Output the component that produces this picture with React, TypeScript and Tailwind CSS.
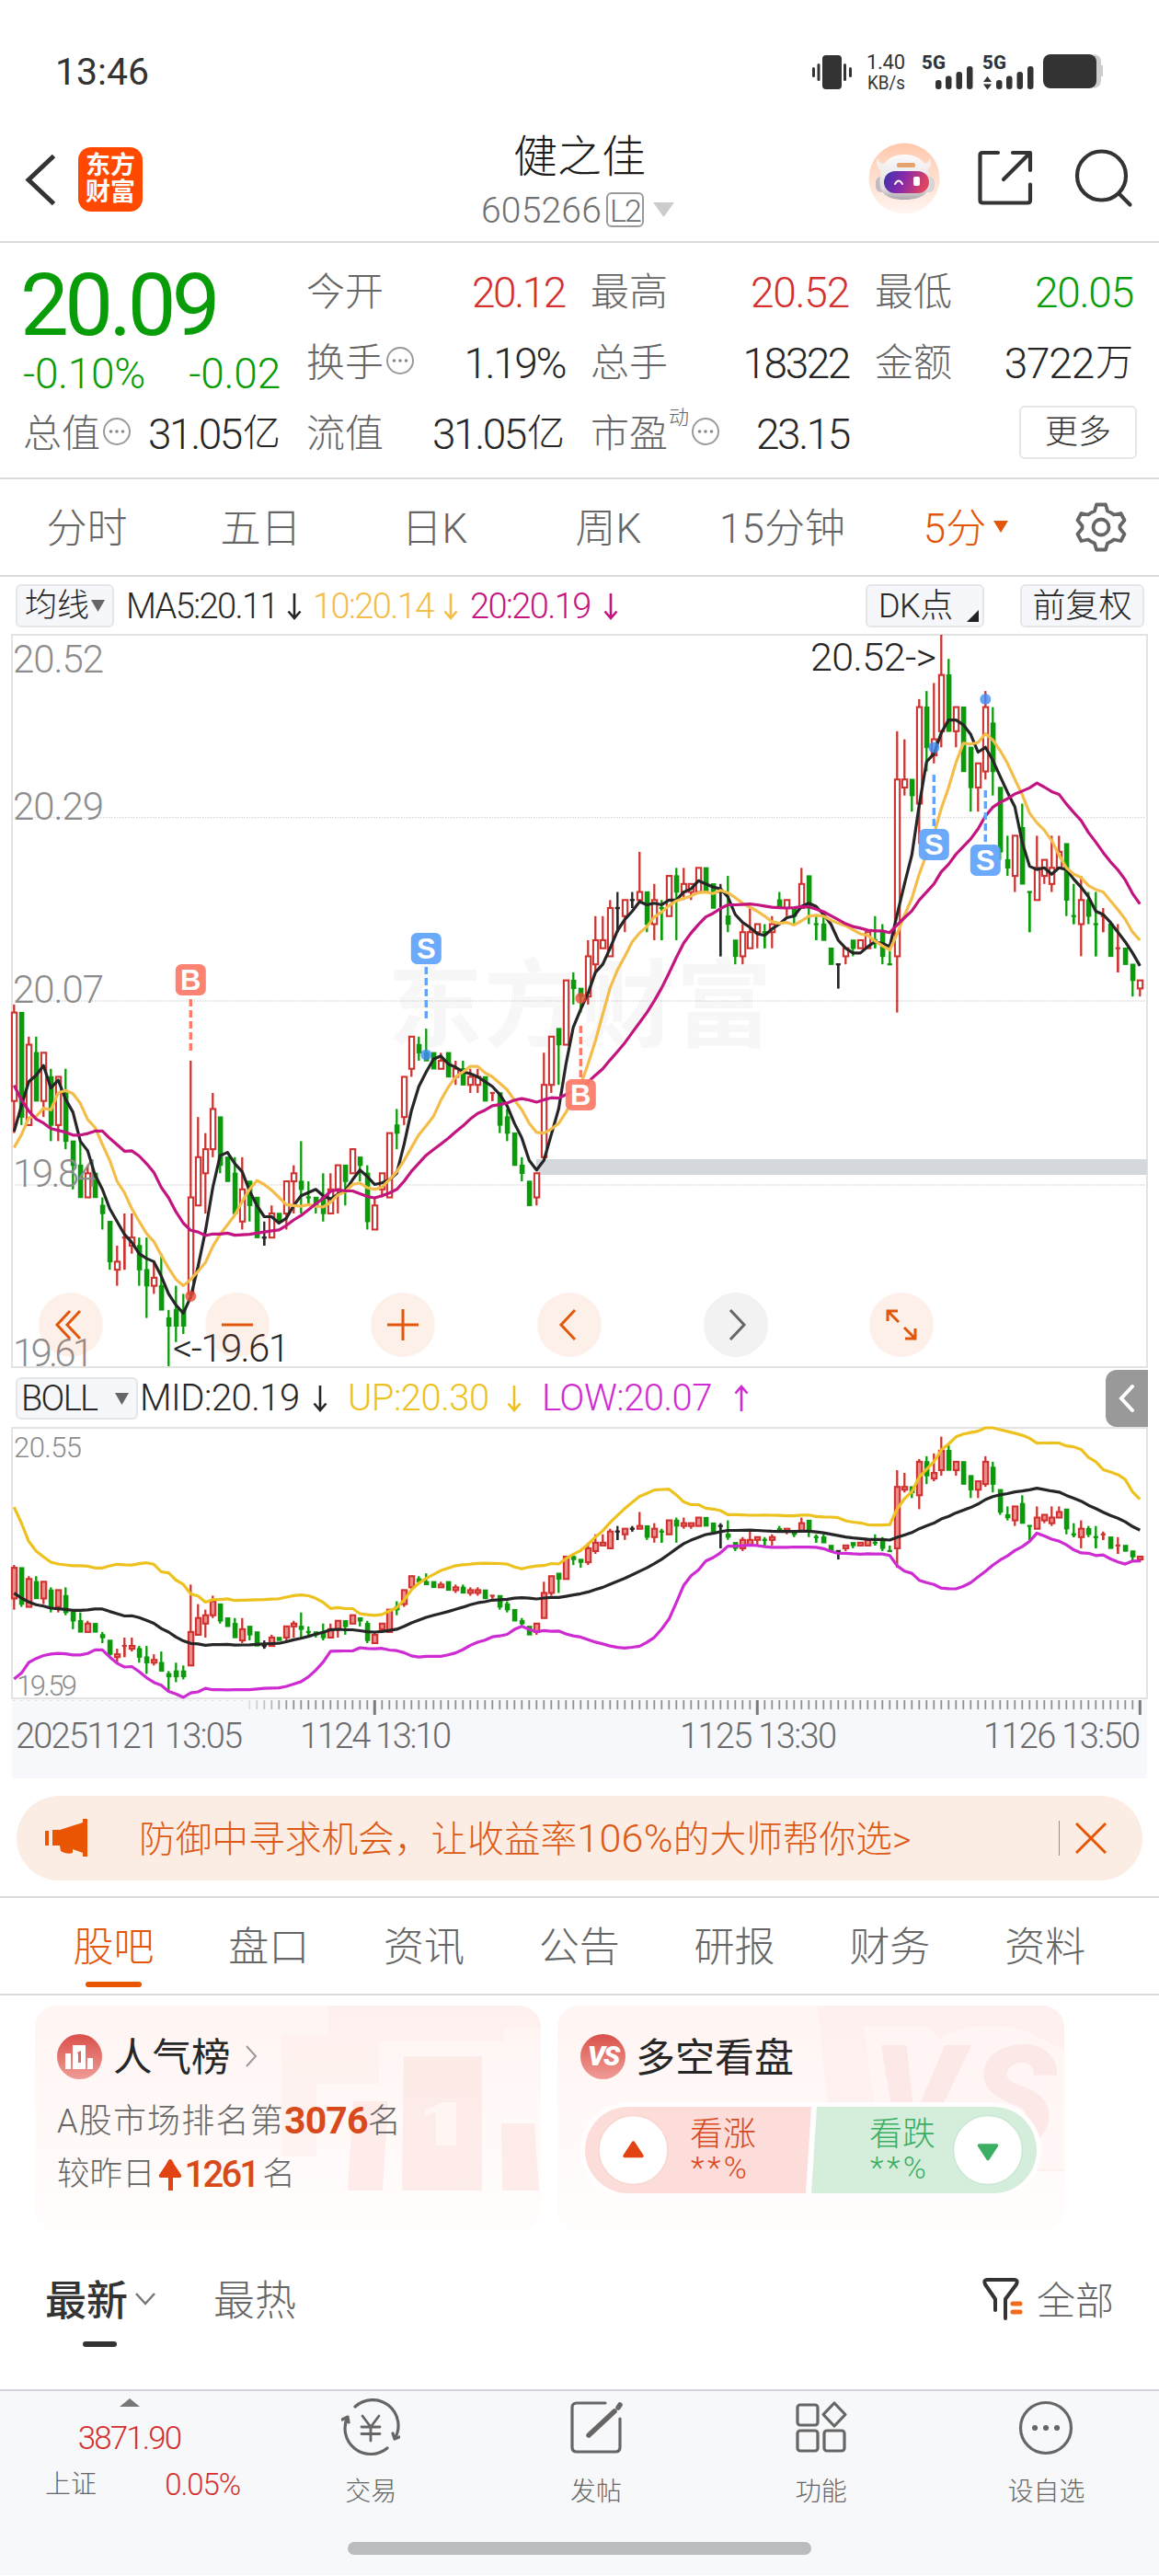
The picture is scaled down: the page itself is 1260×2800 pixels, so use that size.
import { ReactNode } from "react";

const RED = "#cb3432";
const GREEN = "#089d08";
const BLACK = "#262626";

// cents above 19.00, one bar per 5 minutes: open, close, high, low
const BARS: number[][] = [
  [94, 105, 106, 90], [105, 92, 105, 91], [91, 101, 102, 91], [100, 94, 102, 94], [94, 100, 100, 92],
  [97, 91, 98, 89], [91, 97, 97, 89], [95, 89, 98, 88], [89, 86, 89, 83], [86, 82, 89, 82],
  [82, 85, 86, 82], [85, 82, 85, 82], [81, 80, 82, 78], [79, 74, 79, 73], [73, 74, 76, 71],
  [77, 77, 80, 73], [76, 77, 80, 75], [76, 73, 77, 71], [73, 71, 77, 67], [71, 72, 74, 70],
  [71, 68, 75, 68], [67, 66, 68, 61], [68, 66, 71, 64], [68, 66, 70, 65], [70, 82, 99, 70],
  [81, 87, 92, 81], [85, 88, 90, 80], [88, 93, 95, 87], [92, 86, 92, 85], [87, 84, 87, 84],
  [85, 80, 87, 80], [79, 83, 87, 78], [84, 81, 84, 79], [82, 77, 82, 77], [77, 77, 79, 76],
  [77, 80, 81, 77], [80, 79, 80, 79], [80, 84, 84, 78], [84, 85, 86, 80], [84, 83, 89, 80],
  [82, 82, 84, 81], [82, 81, 82, 80], [82, 80, 85, 79], [80, 83, 85, 80], [83, 86, 86, 80],
  [86, 84, 86, 81], [85, 88, 88, 85], [87, 86, 87, 84], [85, 79, 86, 78], [78, 81, 82, 78],
  [83, 85, 85, 82], [82, 90, 90, 82], [91, 90, 93, 88], [92, 97, 97, 91], [98, 102, 102, 97],
  [101, 100, 102, 99], [100, 99, 103, 99], [100, 98, 100, 98], [98, 99, 100, 98], [100, 97, 100, 97],
  [97, 98, 99, 96], [98, 96, 99, 96], [96, 97, 98, 95], [96, 97, 98, 95], [97, 94, 97, 94],
  [95, 95, 95, 94], [95, 91, 95, 90], [92, 90, 93, 89], [90, 86, 90, 86], [86, 85, 87, 84],
  [84, 81, 84, 81], [82, 85, 85, 81], [87, 96, 100, 87], [96, 102, 102, 95], [103, 101, 103, 96],
  [101, 109, 109, 101], [109, 108, 110, 106], [108, 107, 108, 105], [107, 112, 114, 106], [111, 114, 117, 110],
  [113, 114, 117, 113], [112, 118, 119, 112], [118, 118, 120, 115], [117, 119, 119, 115], [119, 119, 120, 118],
  [119, 120, 125, 119], [120, 116, 120, 115], [116, 119, 121, 114], [118, 118, 119, 114], [117, 122, 122, 117],
  [122, 120, 123, 114], [120, 121, 123, 119], [120, 121, 121, 119], [120, 123, 123, 120], [123, 120, 123, 120],
  [121, 118, 121, 118], [120, 120, 121, 112], [117, 116, 122, 115], [114, 112, 114, 111], [112, 115, 116, 111],
  [113, 115, 118, 113], [115, 116, 116, 113], [115, 115, 116, 113], [115, 116, 117, 113], [119, 118, 120, 118],
  [118, 119, 119, 117], [118, 117, 118, 116], [118, 121, 123, 118], [122, 118, 122, 116], [116, 116, 117, 114],
  [116, 114, 117, 114], [113, 111, 113, 111], [111, 111, 111, 108], [112, 113, 113, 111], [114, 113, 114, 112],
  [113, 114, 114, 113], [113, 115, 115, 113], [114, 114, 117, 113], [115, 112, 116, 111], [111, 111, 113, 111],
  [112, 134, 140, 105], [133, 134, 139, 132], [134, 132, 134, 130], [131, 143, 144, 126], [143, 138, 145, 135],
  [137, 139, 146, 136], [140, 147, 152, 138], [147, 140, 149, 140], [140, 143, 143, 138], [143, 135, 143, 135],
  [138, 133, 138, 130], [133, 136, 136, 130], [135, 143, 145, 134], [141, 135, 143, 132], [133, 125, 133, 124],
  [124, 123, 127, 122], [122, 127, 127, 120], [128, 121, 131, 121], [120, 120, 120, 115], [119, 123, 127, 119],
  [122, 124, 124, 121], [121, 123, 127, 120], [123, 125, 127, 123], [126, 119, 126, 117], [117, 117, 121, 116],
  [116, 119, 122, 112], [119, 117, 120, 116], [116, 116, 120, 112], [117, 117, 118, 115], [116, 112, 116, 112],
  [113, 113, 116, 110], [113, 111, 113, 111], [111, 109, 111, 107], [108, 109, 109, 107],
];

// closes before the first visible bar, needed by the moving averages
const HISTORY = [128, 129, 114, 110, 105, 101, 94, 93, 82, 81, 76, 80, 92, 90, 93, 76, 86, 90, 94];
const CLOSES = [...HISTORY, ...BARS.map((b) => b[1])];

const FLAT_RED = [15, 65, 148, 150];
const FLAT_BLACK = [34, 82, 84, 96, 112];

function windowAt(i: number, n: number) {
  const end = i + HISTORY.length + 1;
  return CLOSES.slice(end - n, end);
}

function mean(v: number[]) {
  return v.reduce((a, b) => a + b, 0) / v.length;
}

function deviation(v: number[]) {
  const m = mean(v);
  return Math.sqrt(v.reduce((a, b) => a + (b - m) ** 2, 0) / (v.length - 1));
}

const ma = (n: number) => BARS.map((_, i) => mean(windowAt(i, n)));
const MA5 = ma(5);
const MA10 = ma(10);
const MA20 = ma(20);
const DEV = BARS.map((_, i) => deviation(windowAt(i, 20)));
const UP = MA20.map((m, i) => m + 2 * DEV[i]);
const LOW = MA20.map((m, i) => m - 2 * DEV[i]);
const BOLL_MAX = Math.max(...UP);
const BOLL_MIN = Math.min(...LOW);

const xAt = (i: number) => 15.3 + i * 8;
const mainY = (c: number) => 690 + (152 - c) * 8.736;
const bollY = (c: number) => 1552 + ((BOLL_MAX - c) / (BOLL_MAX - BOLL_MIN)) * 293;

function Line({ values, y, color }: { values: number[]; y: (c: number) => number; color: string }) {
  const points = values.map((v, i) => `${xAt(i).toFixed(1)},${y(v).toFixed(1)}`).join(" ");
  return <polyline points={points} fill="none" stroke={color} strokeWidth="3.2" strokeLinejoin="round" />;
}

function Candles({ y, fill }: { y: (c: number) => number; fill: string }) {
  return (
    <g>
      {BARS.map(([o, c, h, l], i) => {
        const x = xAt(i);
        const flat = o === c;
        const color = FLAT_BLACK.includes(i) ? BLACK : c > o || FLAT_RED.includes(i) ? RED : GREEN;
        const top = y(Math.max(o, c));
        const bottom = y(Math.min(o, c));
        return (
          <g key={i}>
            <line x1={x} x2={x} y1={y(h)} y2={flat ? y(l) : top} stroke={color} strokeWidth="2.3" />
            <line x1={x} x2={x} y1={bottom} y2={y(l)} stroke={color} strokeWidth="2.3" />
            {flat && <line x1={x - 2.6} x2={x + 2.6} y1={top} y2={top} stroke={color} strokeWidth="2.3" />}
            {c > o && (
              <rect x={x - 2.4} y={top} width="5.3" height={Math.max(bottom - top, 1)} fill={fill} stroke={color} strokeWidth="2.1" />
            )}
            {c < o && <rect x={x - 2.5} y={top - 0.7} width="5.6" height={bottom - top + 1.4} fill={color} />}
          </g>
        );
      })}
    </g>
  );
}

function Label({ x, y, w, size, color, children }: { x: number; y: number; w: number; size: number; color: string; children: ReactNode }) {
  return (
    <text x={x} y={y} textLength={w} fontSize={size} fill={color} lengthAdjust="spacing">
      {children}
    </text>
  );
}

const MARKERS = [
  { kind: "B", x: 207.3, box: 1065, from: 1086, to: 1142, dot: 1409 },
  { kind: "S", x: 463.3, box: 1031, from: 1051, to: 1107, dot: 1146.5 },
  { kind: "B", x: 631.3, box: 1190, from: 1115, to: 1171, dot: 1085 },
  { kind: "S", x: 1015.3, box: 918, from: 842, to: 898, dot: 812.5 },
  { kind: "S", x: 1071.3, box: 935, from: 859, to: 915, dot: 760 },
];

function MainChart() {
  return (
    <svg width="1260" height="797" viewBox="0 690 1260 797" className="block overflow-visible">
      <text x="421" y="1130" fontSize="104" fontWeight="700" fill="#f7f7f7" textLength="418">东方财富</text>
      {[888.7, 1088, 1288].map((y) => (
        <line key={y} x1="13" x2="1247" y1={y} y2={y} stroke="#d8d8d8" strokeWidth="1.3" strokeDasharray="1.5 1.5" />
      ))}
      <rect x="13" y="690" width="1234" height="796" fill="none" stroke="#e3e3e3" strokeWidth="2" />
      <rect x="583" y="1260" width="664" height="17" fill="#d4d7dc" />
      <Candles y={mainY} fill="#fff" />
      <Label x={14} y={731} w={99} size={42} color="#8c8c8c">20.52</Label>
      <Label x={14} y={891} w={99} size={42} color="#8c8c8c">20.29</Label>
      <Label x={14} y={1090} w={99} size={42} color="#8c8c8c">20.07</Label>
      <Label x={14} y={1290} w={93} size={42} color="#8c8c8c">19.84</Label>
      <Label x={14} y={1485} w={88} size={42} color="#8c8c8c">19.61</Label>
      <Line values={MA5} y={mainY} color={BLACK} />
      <Line values={MA10} y={mainY} color="#f4bc49" />
      <Line values={MA20} y={mainY} color="#c3147f" />
      <Label x={881} y={729} w={137} size={43} color={BLACK}>20.52-&gt;</Label>
      <Label x={188} y={1480} w={127} size={42} color={BLACK}>&lt;-19.61</Label>
      {MARKERS.map((m) => {
        const color = m.kind === "B" ? "#fb7c6c" : "#63a4fb";
        return (
          <g key={m.x}>
            <line x1={m.x} x2={m.x} y1={m.from} y2={m.to} stroke={color} strokeWidth="3.4" strokeDasharray="8 4" />
            <circle cx={m.x} cy={m.dot} r="6" fill={m.kind === "B" ? "#ea4a35" : "#3f8cf5"} opacity="0.8" />
            <rect x={m.x - 16.5} y={m.box - 17} width="33" height="34" rx="6.5" fill={color} opacity="0.95" />
            <text x={m.x} y={m.box + 11} textAnchor="middle" fontSize="31" fontWeight="700" fontFamily="Liberation Sans" fill="#fff">
              {m.kind}
            </text>
          </g>
        );
      })}
    </svg>
  );
}

function BollChart() {
  return (
    <svg width="1260" height="296" viewBox="0 1551 1260 296" className="block overflow-visible">
      <rect x="13" y="1552" width="1234" height="294" fill="none" stroke="#e3e3e3" strokeWidth="2" />
      <Label x={15} y={1584} w={74} size={31} color="#8c8c8c">20.55</Label>
      <Label x={18} y={1843} w={66} size={31} color="#8c8c8c">19.59</Label>
      <Candles y={bollY} fill="#f08a88" />
      <Line values={MA20} y={bollY} color={BLACK} />
      <Line values={UP} y={bollY} color="#edc21f" />
      <Line values={LOW} y={bollY} color="#cf2bd3" />
    </svg>
  );
}

function TimeAxis() {
  return (
    <svg width="1234" height="86" viewBox="13 1847 1234 86" className="ml-[13px] block bg-[#f7f8fb]">
      {BARS.map((_, i) => {
        const x = xAt(i);
        if (i < 32) return <line key={i} x1={x - 1} x2={x + 1} y1="1848.5" y2="1848.5" stroke="#dcdcdc" />;
        const major = i === 49 || i === 101 || i === 153;
        return (
          <line key={i} x1={x} x2={x} y1="1848" y2={major ? 1864 : 1858} strokeWidth={major ? 3 : 1.8}
            stroke={major ? "#7a7a7a" : "#919191"} opacity={Math.min(1, (i - 30) / 8)} />
        );
      })}
      <Label x={17} y={1900} w={247} size={38} color="#6b6b6b">20251121 13:05</Label>
      <Label x={326} y={1900} w={165} size={38} color="#6b6b6b">1124 13:10</Label>
      <Label x={739} y={1900} w={171} size={38} color="#6b6b6b">1125 13:30</Label>
      <Label x={1069} y={1900} w={171} size={38} color="#6b6b6b">1126 13:50</Label>
    </svg>
  );
}

function StatusBar() {
  return (
    <div className="flex h-[130px] items-start justify-between pt-[50px] pr-[60px] pl-[60px]">
      <div className="mt-[3px] text-[41px] leading-[50px] font-normal text-[#333]">13:46</div>
      <svg width="320" height="56" viewBox="880 50 320 56" fill="#333">
        <rect x="894" y="60" width="21" height="37" rx="4" />
        <rect x="888.500" y="69" width="3" height="19" rx="1.500" />
        <rect x="883" y="73" width="3" height="11" rx="1.500" />
        <rect x="917" y="69" width="3" height="19" rx="1.500" />
        <rect x="923" y="73" width="3" height="11" rx="1.500" />
        <text x="942" y="75" fontSize="22" fontWeight="400" textLength="42">1.40</text>
        <text x="943" y="97" fontSize="20" fontWeight="400" textLength="41" lengthAdjust="spacingAndGlyphs">KB/s</text>
        <text x="1002" y="74.500" fontSize="20.500" fontWeight="800" textLength="26">5G</text>
        <text x="1068" y="74.500" fontSize="20.500" fontWeight="800" textLength="26">5G</text>
        {[1017, 1083].map((x) => (
          <g key={x}>
            <rect x={x} y="87" width="6.500" height="10" rx="3" />
            <rect x={x + 11} y="82.500" width="6.500" height="14.500" rx="3" />
            <rect x={x + 22.5} y="78" width="6.500" height="19" rx="3" />
            <rect x={x + 34} y="72" width="6.500" height="25" rx="3" />
          </g>
        ))}
        <path d="M1069 89h9l-4.500-6zM1069 91.500h9l-4.500 6z" />
        <path d="M1189 59q8 1 8 8v4h2v12h-2v4q0 8-8 9z" fill="#ccc" />
        <rect x="1134" y="59" width="58" height="37" rx="8" />
      </svg>
    </div>
  );
}

function Robot() {
  return (
    <svg width="78" height="78" viewBox="0 0 78 78">
      <defs>
        <linearGradient id="halo" x1="0" y1="0" x2="0" y2="1">
          <stop offset="0" stopColor="#ffc8ab" />
          <stop offset="1" stopColor="#fff6f2" />
        </linearGradient>
        <linearGradient id="visor" x1="0" y1="0" x2="1" y2="0.2">
          <stop offset="0" stopColor="#3a33b0" />
          <stop offset="0.5" stopColor="#8a2aa8" />
          <stop offset="1" stopColor="#e04460" />
        </linearGradient>
        <linearGradient id="shell" x1="0" y1="0" x2="0" y2="1">
          <stop offset="0" stopColor="#fbfafa" />
          <stop offset="0.75" stopColor="#e3dfe0" />
          <stop offset="1" stopColor="#aba6aa" />
        </linearGradient>
      </defs>
      <circle cx="39" cy="39" r="38.500" fill="url(#halo)" />
      <path d="M15 31C8 27 8 21 10 17c2 6 6 6 12 6zM62 31c7-4 7-10 5-14-2 6-6 6-12 6z" fill="#f4efef" />
      <rect x="8" y="37" width="12" height="17" rx="6" fill="#c3bdc2" />
      <rect x="60" y="37" width="12" height="17" rx="6" fill="#d9d4d6" />
      <path d="M39 13c17 0 26 10 27 24 4 15-4 25-27 25S11 52 13 37c1-14 9-24 26-24z" fill="url(#shell)" />
      <rect x="31" y="22" width="20" height="5" rx="2" fill="#e5a36f" />
      <rect x="17" y="31" width="49" height="24" rx="12" fill="url(#visor)" />
      <path d="M29 45q4-7 8 0" fill="none" stroke="#fff" strokeWidth="2" strokeLinecap="round" />
      <rect x="49" y="37" width="7" height="10" rx="2" fill="#fff" />
    </svg>
  );
}

function Header() {
  return (
    <header className="flex h-[134px] items-start justify-between border-b-2 border-[#dadada] px-[26px]">
      <div className="flex w-[380px] items-center pt-[29px]">
        <svg width="59" height="72" viewBox="26 159 59 72" fill="none" stroke="#333" strokeWidth="5">
          <path d="M58.500 169.500L31 195.500l27.500 26" />
        </svg>
        <div className="flex size-[70px] flex-col items-center justify-center rounded-[14px] bg-[#ff4800] text-[27px] leading-[29px] font-bold text-white">
          <span>东方</span>
          <span>财富</span>
        </div>
      </div>
      <div className="flex flex-col items-center pt-[14px]">
        <h1 className="text-[48px] leading-[54px] text-[#1c1c1c]">健之佳</h1>
        <div className="mt-[9px] mr-[3px] flex h-[42px] items-center text-[39px] leading-[42px] text-[#707070]">
          <span className="pt-[2px] tracking-[0.200px]">605266</span>
          <span className="ml-[5px] flex h-[38px] w-[41px] items-center justify-center rounded-[6px] border-2 border-[#999] pt-[2px] text-[34px] tracking-[-2px]">L2</span>
          <svg width="24" height="16" className="ml-[10px]" viewBox="0 0 24 16"><path d="M0 0h23L11.500 16z" fill="#ccc" /></svg>
        </div>
      </div>
      <div className="flex w-[380px] items-center justify-end pt-[25px] pr-[2px]">
        <Robot />
        <svg width="64" height="66" viewBox="1062 162 64 66" className="ml-[39px]" fill="none" stroke="#333" strokeWidth="4.200" strokeLinecap="round" strokeLinejoin="round">
          <path d="M1086 167h-17q-2.500 0-2.500 2.500v49q0 3 3 3h48.500q3 0 3-3v-17M1102 167h19v19M1120 168l-28 28" />
        </svg>
        <svg width="64" height="66" viewBox="1168 161 64 66" className="ml-[43px]" fill="none" stroke="#333" strokeWidth="4.200" strokeLinecap="round">
          <circle cx="1197.500" cy="191" r="26.500" />
          <path d="M1217 211l11.500 11.500" />
        </svg>
      </div>
    </header>
  );
}

function Dots() {
  return (
    <svg width="32" height="32" viewBox="0 0 32 32" className="mt-[-6px] ml-[2px]">
      <circle cx="16" cy="16" r="14" fill="none" stroke="#999" strokeWidth="2" />
      <circle cx="9.500" cy="16" r="1.800" fill="#888" />
      <circle cx="16" cy="16" r="1.800" fill="#888" />
      <circle cx="22.500" cy="16" r="1.800" fill="#888" />
    </svg>
  );
}

function Stat({ label, value, unit, color = "text-[#262626]", dots, sup }: { label: string; value: string; unit?: string; color?: string; dots?: boolean; sup?: string }) {
  // figures without the narrow 1 are set a little looser
  const tracking = value.includes("1") ? "tracking-[-2.400px]" : "tracking-[-1.200px]";
  return (
    <div className="flex items-center justify-between whitespace-nowrap">
      <span className="flex items-center text-[42px] text-[#666]">
        {label}
        {sup && <sup className="top-[-18px] ml-[1px] text-[22px]">{sup}</sup>}
        {dots && <Dots />}
      </span>
      <span className={`flex items-center ${color}`}>
        <span className={`text-[46px] ${tracking}`}>{value}</span>
        {unit && <span className="ml-[2px] text-[41px]">{unit}</span>}
      </span>
    </div>
  );
}

function Quote() {
  return (
    <section className="grid h-[257px] grid-cols-[280px_281px_281px_281px] grid-rows-[77px_77px_77px] gap-x-[28px] border-b-2 border-[#dadada] pt-[15px] pl-[25px] leading-none">
      <div className="row-span-2 flex flex-col text-[#089d08]">
        <div className="mt-[4px] ml-[-3px] text-[94px] leading-[98px] font-normal tracking-[-4.600px]">20.09</div>
        <div className="flex justify-between text-[46px] leading-[50px]">
          <span className="tracking-[-0.300px]">-0.10%</span>
          <span className="tracking-[-0.200px]">-0.02</span>
        </div>
      </div>
      <Stat label="今开" value="20.12" color="text-[#d3302f]" />
      <Stat label="最高" value="20.52" color="text-[#d3302f]" />
      <Stat label="最低" value="20.05" color="text-[#089d08]" />
      <Stat label="换手" value="1.19%" dots />
      <Stat label="总手" value="18322" />
      <Stat label="金额" value="3722" unit="万" />
      <Stat label="总值" value="31.05" unit="亿" dots />
      <Stat label="流值" value="31.05" unit="亿" />
      <Stat label="市盈" value="23.15" dots sup="动" />
      <div className="flex items-center justify-end">
        <button className="mt-[-4px] mr-[-4px] h-[58px] w-[128px] rounded-[6px] border-2 border-[#e6e6e6] text-[36px] text-[#333]">更多</button>
      </div>
    </section>
  );
}

function PeriodTabs() {
  return (
    <nav className="flex h-[106px] items-center border-b-2 border-[#dadada] text-[44px] text-[#666]">
      {["分时", "五日", "日K", "周K", "15分钟"].map((t) => (
        <button key={t} className="w-[189px] pt-[4px] text-center whitespace-nowrap">{t}</button>
      ))}
      <button className="flex w-[210px] items-center justify-center pt-[4px] text-[#e2570c]">
        5分
        <svg width="16" height="14" viewBox="0 0 16 14" className="mt-[-4px] ml-[8px]"><path d="M0 0h16L8 13z" fill="#e2570c" /></svg>
      </button>
      <button className="flex w-[84px] justify-center">
        <svg width="56" height="56" viewBox="0 0 56 56" fill="none" stroke="#666" strokeWidth="3.800" strokeLinejoin="round">
          <path d="M23 3.500h10l2 7q4 1.500 7 4l7.500-1.500 4 7.500-5 6v3l5 6-4 7.500-7.500-1.500q-3 2.500-7 4l-2 7H23l-2-7q-4-1.500-7-4L6.500 43l-4-7.500 5-6v-3l-5-6L6.500 13l7.500 1.500q3-2.500 7-4z" />
          <circle cx="28" cy="28" r="8.500" />
        </svg>
      </button>
    </nav>
  );
}

function Arrow({ up }: { up?: boolean }) {
  return (
    <svg width="16" height="32" viewBox="0 0 16 32" fill="none" stroke="currentColor" strokeWidth="2.600" className={up ? "flex-none rotate-180" : "flex-none"}>
      <path d="M8 2v26M1.500 21.500L8 29l6.500-7.500" />
    </svg>
  );
}

function IndicatorRow() {
  return (
    <div className="flex h-[63px] items-center pl-[17px] text-[38px] leading-none tracking-[-1.600px] whitespace-nowrap">
      <button className="flex h-[47px] w-[107px] flex-none items-center rounded-[6px] border-2 border-[#e4e6ea] bg-[#f6f7fa] pl-[8px] text-[35px] tracking-[0px] text-[#262626]">
        均线
        <svg width="15" height="13" viewBox="0 0 15 13" className="ml-[2px]"><path d="M0 0h15L7.500 13z" fill="#666" /></svg>
      </button>
      <div className="flex w-[204px] flex-none items-center justify-between pl-[13px] text-[#262626]">MA5:20.11<Arrow /></div>
      <div className="flex w-[170px] flex-none items-center justify-between pl-[12px] text-[#f4bc49]">10:20.14<Arrow /></div>
      <div className="flex w-[174px] flex-none items-center justify-between pl-[13px] text-[#c3147f]">20:20.19<Arrow /></div>
      <button className="relative ml-auto h-[47px] w-[129px] rounded-[6px] border-2 border-[#e4e6ea] bg-[#f6f7fa] pl-[12px] text-left text-[36px] tracking-[-0.500px] text-[#262626]">
        DK点
        <svg width="13" height="13" viewBox="0 0 13 13" className="absolute right-[4px] bottom-[4px]"><path d="M13 0v13H0z" fill="#222" /></svg>
      </button>
      <button className="mr-[16px] ml-[39px] h-[47px] w-[135px] rounded-[6px] border-2 border-[#e4e6ea] bg-[#f6f7fa] text-[36px] tracking-[0px] text-[#262626]">前复权</button>
    </div>
  );
}

const CONTROLS = [
  "M-1 -15L-15 0L-1 15M10 -15L-4 0L10 15",
  "M-17 0H17",
  "M-17 0H17M0 -17V17",
  "M6 -16L-9 0L6 16",
  "M-6 -16L9 0L-6 16",
  "M-15 -4V-15H-4M-15 -15L-3 -3M15 4V15H4M15 15L3 3",
];

function ChartControls() {
  return (
    <div className="absolute bottom-[12px] left-[42px] flex gap-[110.700px]">
      {CONTROLS.map((d, i) => (
        <button key={d} className={i === 4 ? "size-[70px] rounded-full bg-[#f2f2f2]" : "size-[70px] rounded-full bg-[#ec6a20]/10"}>
          <svg width="70" height="70" viewBox="-35 -35 70 70" fill="none" stroke={i === 4 ? "#666" : "#e2570c"} strokeWidth="3">
            <path d={d} />
          </svg>
        </button>
      ))}
    </div>
  );
}

function BollRow() {
  return (
    <div className="flex h-[64px] items-center pt-[2px] pl-[17px] text-[40px] leading-none tracking-[-0.500px] whitespace-nowrap">
      <button className="flex h-[46px] w-[133px] items-center justify-between rounded-[6px] border-2 border-[#e4e6ea] bg-[#f6f7fa] pr-[8px] pl-[4px] text-[38px] tracking-[-1.700px] text-[#262626]">
        BOLL
        <svg width="15" height="13" viewBox="0 0 15 13"><path d="M0 0h15L7.500 13z" fill="#666" /></svg>
      </button>
      <div className="flex w-[206px] items-center justify-between pl-[2px] text-[#262626]">MID:20.19<Arrow /></div>
      <div className="flex w-[211px] items-center justify-between pl-[22px] text-[#edc21f]">UP:20.30<Arrow /></div>
      <div className="flex w-[247px] items-center justify-between pl-[22px] text-[#cf2bd3]">LOW:20.07<Arrow up /></div>
      <button className="mr-[12px] ml-auto flex h-[62px] w-[46px] items-center justify-center rounded-l-[12px] bg-[#999]">
        <svg width="18" height="30" viewBox="0 0 18 30" fill="none" stroke="#fff" strokeWidth="4" strokeLinecap="round"><path d="M15 2L3 15l12 13" /></svg>
      </button>
    </div>
  );
}

function Banner() {
  return (
    <div className="mx-[18px] mt-[19px] flex h-[92px] items-center rounded-full bg-[#fcede4] pl-[31px] text-[#dd5a16]">
      <svg width="46" height="42" viewBox="0 0 46 42" fill="#ea5504">
        <path d="M0 13h4v16H0zM8 12h8L41 4V0h5v41h-5v-4l-11-4v4q-7 2-13-2l-1-6H8z" />
      </svg>
      <span className="ml-[56px] text-[39.700px] whitespace-nowrap">
        防御中寻求机会，让收益率<span className="text-[43px] tracking-[0.300px]">106%</span>的大师帮你选&gt;
      </span>
      <span className="mr-[17px] ml-auto h-[38px] w-[1.500px] bg-[#dd7a42]" />
      <svg width="34" height="34" viewBox="0 0 34 34" className="mr-[39px]" fill="none" stroke="#ea5504" strokeWidth="3">
        <path d="M1 1l32 32M33 1L1 33" />
      </svg>
    </div>
  );
}

function SectionTabs() {
  return (
    <nav className="mt-[17px] flex h-[108px] border-y-2 border-[#dadada] px-[39px] text-[44px] text-[#666]">
      {["股吧", "盘口", "资讯", "公告", "研报", "财务", "资料"].map((t, i) => (
        <button key={t} className="relative w-[168.800px] flex-none pt-[3px] text-center">
          <span className={i === 0 ? "text-[#e2570c]" : ""}>{t}</span>
          {i === 0 && <span className="absolute bottom-[7px] left-[54px] h-[6px] w-[61px] rounded-full bg-[#ea5504]" />}
        </button>
      ))}
    </nav>
  );
}

function RankCard() {
  return (
    <div className="relative h-[245px] w-[550px] overflow-hidden rounded-[24px] bg-linear-to-b from-[#fff5f3] to-[#fffdfc]">
      <svg width="550" height="245" viewBox="38 2181 550 245" className="absolute inset-0">
        <path d="M306 2345v-132h51v-32h231v25h-40v14H412v46h-68v79z" fill="#fdeae8" opacity="0.45" />
        <path d="M439 2236h85v146h-87zM384 2285h38l-6 97h-38zM545 2309h36l5 73h-40z" fill="#fbe2e0" opacity="0.6" />
        <path d="M462 2295l20-9h14v47h-22v-36l-12 4z" fill="#fff5f3" />
      </svg>
      <div className="relative pt-[31px] pl-[24px]">
        <div className="flex h-[48px] items-center">
          <svg width="49" height="49" viewBox="0 0 49 49">
            <defs><linearGradient id="disc" x1="0" y1="0" x2="0" y2="1"><stop offset="0" stopColor="#d9504b" /><stop offset="1" stopColor="#ef9c97" /></linearGradient></defs>
            <circle cx="24.500" cy="24.500" r="24.500" fill="url(#disc)" />
            <path d="M17 12h14v26H17zM9 21h6v17H9zM33 26h6v12h-6z" fill="#fff" />
            <path d="M22 20l4-2v13h-3V22" fill="#d96a65" />
          </svg>
          <span className="ml-[12px] pt-[3px] text-[42.500px] leading-[48px] font-normal text-[#262626]">人气榜</span>
          <svg width="14" height="24" viewBox="0 0 14 24" className="ml-[15px]" fill="none" stroke="#999" strokeWidth="2"><path d="M2 1l10 11L2 23" /></svg>
        </div>
        <div className="mt-[23px] flex h-[48px] items-center text-[36px] whitespace-nowrap text-[#666]">
          <span className="tracking-[1.200px]">A股市场排名第</span>
          <b className="text-[41px] font-bold tracking-[-0.800px] text-[#d84a1c]">3076</b>名
        </div>
        <div className="mt-[10px] flex h-[48px] items-center text-[35.500px] whitespace-nowrap text-[#666]">
          较昨日
          <svg width="26" height="34" viewBox="0 0 26 34" className="mr-[3px] ml-[3px]" fill="#e24312"><path d="M13 0q2 0 4 5l8 12q1 3-2 3h-7v14h-5V20H3q-3 0-2-3L9 5q2-5 4-5z" /></svg>
          <span className="mr-[5px] text-[40px] font-medium tracking-[-2.800px] text-[#d84a1c]">1261</span>名
        </div>
      </div>
    </div>
  );
}

function VersusCard() {
  return (
    <div className="relative h-[245px] w-[551px] overflow-hidden rounded-[24px] bg-linear-to-b from-[#fff5f3] to-[#fffdfc]">
      <svg width="551" height="245" viewBox="606 2181 551 245" className="absolute inset-0">
        <path d="M889 2181h268v180h-250z" fill="#fdeceb" opacity="0.6" />
        <path d="M939 2203h70l12 14q40-22 90-10l46 22v130H960z" fill="#fff8f6" opacity="0.7" />
        <text x="948" y="2332" fontSize="152" fontWeight="900" fontStyle="italic" fill="#fbe5e4" textLength="200" opacity="0.8">VS</text>
      </svg>
      <div className="relative mt-[31px] flex h-[48px] items-center pl-[25px]">
        <div className="flex size-[49px] items-center justify-center rounded-full bg-linear-to-b from-[#d9504b] to-[#ef9c97] text-[30px] leading-none font-black tracking-[-2px] text-white italic">VS</div>
        <span className="ml-[11px] pt-[3px] text-[43px] leading-[48px] font-normal text-[#262626]">多空看盘</span>
      </div>
      <svg width="508" height="106" viewBox="631 2285 508 106" className="relative mt-[25px] ml-[25px] block">
        <rect x="631" y="2286" width="501" height="104" rx="52" fill="#fffdfd" />
        <path d="M683 2291h199l-6 94H683a47 47 0 010-94z" fill="#fdddda" />
        <path d="M888 2291h192a47 47 0 010 94H882z" fill="#d5eedc" />
        <circle cx="688.500" cy="2338" r="37.500" fill="#fff" stroke="#f9d5d1" strokeWidth="1.500" />
        <circle cx="1074" cy="2338" r="37.500" fill="#fff" stroke="#c8e8d2" strokeWidth="1.500" />
        <path d="M688.500 2330l9.500 14.500h-19z" fill="#e24312" stroke="#e24312" strokeWidth="3.500" strokeLinejoin="round" />
        <path d="M1074 2347.500l9.500-14.500h-19z" fill="#3cae63" stroke="#3cae63" strokeWidth="3.500" strokeLinejoin="round" />
        <text x="750" y="2333" fontSize="36" fill="#d84a1c">看涨</text>
        <text x="945" y="2333" fontSize="36" fill="#3cae63">看跌</text>
        <text x="751" y="2369" fontSize="34" fill="#d84a1c" textLength="61">**%</text>
        <text x="946" y="2369" fontSize="34" fill="#3cae63" textLength="61">**%</text>
      </svg>
    </div>
  );
}

function FeedTabs() {
  return (
    <div className="flex h-[172px] items-start pt-[49px] pr-[49px] pl-[49px] text-[45px] leading-[56px]">
      <div className="relative flex items-center font-medium text-[#333]">
        最新
        <svg width="24" height="14" viewBox="0 0 24 14" className="mt-[-6px] ml-[7px]" fill="none" stroke="#777" strokeWidth="2.500"><path d="M2 1l10 11L22 1" /></svg>
        <span className="absolute top-[71px] left-[41px] h-[6px] w-[37px] rounded-full bg-[#333]" />
      </div>
      <div className="ml-[62px] text-[#666]">最热</div>
      <div className="ml-auto flex items-center text-[42px] text-[#666]">
        <svg width="46" height="48" viewBox="0 0 46 48" className="mt-[-6px] mr-[14px]" fill="none" stroke="#333" strokeWidth="4" strokeLinejoin="round" strokeLinecap="round">
          <path d="M15 36V24L4 8q-2-5 2-5h30q4 0 2 5L26 24v21" />
          <path d="M34 29h8M34 38h8" stroke="#f26a1b" strokeWidth="5" />
        </svg>
        全部
      </div>
    </div>
  );
}

function BarItem({ label, children }: { label: string; children: ReactNode }) {
  return (
    <button className="flex w-[244.700px] flex-none flex-col items-center text-[28px] leading-[34px] text-[#666]">
      <svg width="64" height="64" viewBox="-32 -32 64 64" fill="none" stroke="#666" strokeWidth="3.200" strokeLinecap="round" strokeLinejoin="round">
        {children}
      </svg>
      <span className="mt-[21px]">{label}</span>
    </button>
  );
}

function BottomBar() {
  return (
    <footer className="h-[202px] border-t-2 border-[#d3d4dc] bg-[#f7f8fa]">
      <div className="flex h-[164px] pt-[8px]">
        <div className="flex w-[281px] flex-none flex-col items-center">
          <svg width="22" height="9" viewBox="0 0 22 9"><path d="M11 0l11 9H0z" fill="#777" /></svg>
          <div className="mt-[14px] text-[35px] leading-[42px] tracking-[-1.900px] text-[#d3302f]">3871.90</div>
          <div className="mt-[9px] ml-[29px] flex w-[212px] items-center justify-between text-[28px] leading-[40px] text-[#666]">
            上证<span className="text-[33px] tracking-[-1.100px] text-[#d3302f]">0.05%</span>
          </div>
        </div>
        <BarItem label="交易">
          <path d="M-17 -23A28 28 0 0 1 26 12l5-2M26 12l-2-6M18 22A28 28 0 0 1 -25 -12l-6 3M-25 -12l1 6" />
          <path d="M-9 -13L0 -1L9 -13M0 -1V14M-10 -1H10M-10 6.500H10" strokeWidth="2.800" />
        </BarItem>
        <BarItem label="发帖">
          <path d="M10 -27H-21q-5 0-5 5V21q0 5 5 5H21q5 0 5-5V-10" />
          <path d="M-8 8L20 -18M24 -22l2 -3" strokeWidth="5.500" />
        </BarItem>
        <BarItem label="功能">
          <rect x="-26" y="-25" width="22" height="22" rx="3" />
          <rect x="-26" y="3" width="22" height="22" rx="3" />
          <rect x="3" y="3" width="22" height="22" rx="3" />
          <path d="M14 -27L26 -14.500L14 -2L2 -14.500z" />
        </BarItem>
        <BarItem label="设自选">
          <circle r="27.500" />
          <path d="M-12 0h.1M0 0h.1M12 0h.1" strokeWidth="6" />
        </BarItem>
      </div>
      <div className="mx-auto h-[14px] w-[504px] rounded-full bg-[#bbbcbe]" />
    </footer>
  );
}

export default function App() {
  return (
    <div className="h-[2800px] w-[1260px] overflow-hidden bg-white font-['Roboto','Noto_Sans_CJK_SC',sans-serif] font-light">
      <StatusBar />
      <Header />
      <Quote />
      <PeriodTabs />
      <IndicatorRow />
      <div className="relative">
        <MainChart />
        <ChartControls />
      </div>
      <BollRow />
      <BollChart />
      <TimeAxis />
      <Banner />
      <SectionTabs />
      <div className="mt-[11px] flex gap-[18px] pl-[38px]">
        <RankCard />
        <VersusCard />
      </div>
      <FeedTabs />
      <BottomBar />
    </div>
  );
}
